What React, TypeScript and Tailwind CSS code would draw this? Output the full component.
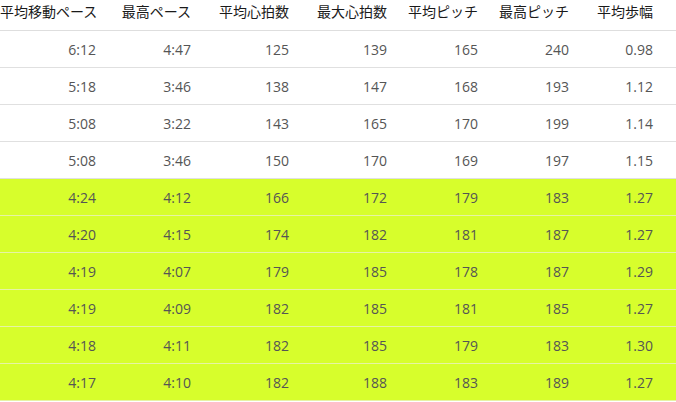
import React from "react";

const headers = ["平均移動ペース", "最高ペース", "平均心拍数", "最大心拍数", "平均ピッチ", "最高ピッチ", "平均歩幅"];

const rows: { v: string[]; hl: boolean }[] = [
  { v: ["6:12", "4:47", "125", "139", "165", "240", "0.98"], hl: false },
  { v: ["5:18", "3:46", "138", "147", "168", "193", "1.12"], hl: false },
  { v: ["5:08", "3:22", "143", "165", "170", "199", "1.14"], hl: false },
  { v: ["5:08", "3:46", "150", "170", "169", "197", "1.15"], hl: false },
  { v: ["4:24", "4:12", "166", "172", "179", "183", "1.27"], hl: true },
  { v: ["4:20", "4:15", "174", "182", "181", "187", "1.27"], hl: true },
  { v: ["4:19", "4:07", "179", "185", "178", "187", "1.29"], hl: true },
  { v: ["4:19", "4:09", "182", "185", "181", "185", "1.27"], hl: true },
  { v: ["4:18", "4:11", "182", "185", "179", "183", "1.30"], hl: true },
  { v: ["4:17", "4:10", "182", "188", "183", "189", "1.27"], hl: true },
];

const grid = "grid grid-cols-[96px_95px_98px_98px_91px_91px_84px_1fr]";

export default function App() {
  return (
    <div className="w-[676px] h-[402px] bg-white overflow-hidden">
      <div
        className={`${grid} h-[31px] border-b border-[#dedede] text-[14px] leading-[22px] text-[#1a1a1a]`}
        style={{ fontFamily: '"Noto Sans CJK JP", "Noto Sans", sans-serif' }}
      >
        {headers.map((h) => (
          <div key={h} className="text-right whitespace-nowrap">
            {h}
          </div>
        ))}
        <div />
      </div>
      {rows.map((r, i) => (
        <div
          key={i}
          className={`${grid} h-[37px] items-center border-b text-[14px] text-[#555555] ${
            r.hl ? "bg-[#d7fe2c] border-[#e6f3a4]" : "bg-white border-[#e0e0e0]"
          }`}
          style={{ fontFamily: '"Open Sans", sans-serif' }}
        >
          {r.v.map((c, j) => (
            <div key={j} className="text-right">
              {c}
            </div>
          ))}
          <div />
        </div>
      ))}
    </div>
  );
}
